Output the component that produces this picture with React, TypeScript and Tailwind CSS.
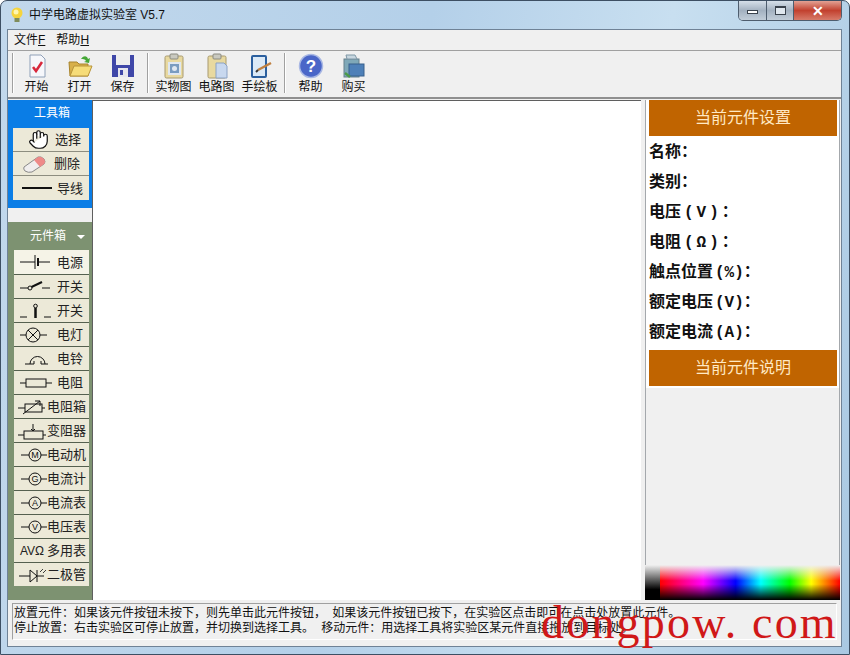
import type { ReactNode } from "react";
import { Hand } from "lucide-react";

const CJK = "font-['Liberation_Sans','Noto_Sans_CJK_SC',sans-serif]";

function ToolbarSep() {
  return <div className="mx-[3px] h-[40px] w-[2px] border-l border-r border-l-[#a0a0a0] border-r-white" />;
}

function ToolbarButton({ label, children }: { label: string; children: ReactNode }) {
  return (
    <div className="flex w-[43px] flex-col items-center">
      <svg width="26" height="26" viewBox="0 0 26 26">{children}</svg>
      <span className="mt-[1px] text-[12px] leading-[14px] text-[#111] whitespace-nowrap">{label}</span>
    </div>
  );
}

function Clipboard({ children }: { children: ReactNode }) {
  return (
    <>
      <rect x="4" y="3" width="18" height="22" rx="1.5" fill="#e8d9a0" stroke="#a89a70" />
      <rect x="9" y="1" width="8" height="5" rx="1" fill="#c9c9c0" stroke="#8b8b80" />
      {children}
    </>
  );
}

function Symbol({ children }: { children: ReactNode }) {
  return (
    <svg width="36" height="20" viewBox="0 0 36 20" fill="none" stroke="#111" strokeWidth="1" className="shrink-0">
      {children}
    </svg>
  );
}

function PartButton({ label, tight, icon }: { label: string; tight?: boolean; icon: ReactNode }) {
  return (
    <div className="flex h-[24px] w-[75px] items-center overflow-hidden border-t border-t-[#55604f] bg-[#ece9d8]">
      <div className={tight ? "ml-[3px] flex w-[30px] justify-center" : "ml-[3px] flex w-[38px] justify-center"}>{icon}</div>
      <span className={`text-[13px] leading-none text-[#222] whitespace-nowrap ${tight ? "" : "ml-[2px]"}`}>{label}</span>
    </div>
  );
}

const Meter = ({ t }: { t: string }) => (
  <Symbol>
    <path d="M7 10h8M27 10h6" />
    <circle cx="21" cy="10" r="6" />
    <text x="21" y="13" textAnchor="middle" fontSize="9" fill="#111" stroke="none" fontFamily="Liberation Sans">{t}</text>
  </Symbol>
);

const parts: { label: string; tight?: boolean; icon: ReactNode }[] = [
  { label: "开关", icon: <Symbol><path d="M2 11h8M24 11h8" /><circle cx="12" cy="11" r="2" /><path d="M13.5 10 L24 5" strokeWidth="2" /></Symbol> },
  { label: "开关", icon: <Symbol><path d="M2 16h7M26 16h7" /><path d="M17.5 7v10" strokeWidth="2.5" /><circle cx="17.5" cy="5" r="1.8" /></Symbol> },
  { label: "电灯", icon: <Symbol><path d="M2 10h6M22 10h7" /><circle cx="15" cy="10" r="7" /><path d="M10 5l10 10M20 5L10 15" /></Symbol> },
  { label: "电铃", icon: <Symbol><path d="M7 15h9M23 15h7M12 15a7.500 7.500 0 0 1 15 0" /><path d="M16 15v-3M23 15v-3" /></Symbol> },
  { label: "电阻", icon: <Symbol><path d="M2 10h6M28 10h6" /><rect x="8" y="6" width="20" height="8" /></Symbol> },
  { label: "电阻箱", tight: true, icon: <Symbol><path d="M4 11h7M28 11h3" /><rect x="11" y="7" width="17" height="8" /><path d="M9 17L26 4M21 4h5v5" /></Symbol> },
  { label: "变阻器", tight: true, icon: <Symbol><path d="M4 14h6M29 14h3" /><rect x="10" y="10" width="19" height="8" /><path d="M19 3v7M17 8l2 2 2-2" /></Symbol> },
  { label: "电动机", tight: true, icon: <Meter t="M" /> },
  { label: "电流计", tight: true, icon: <Meter t="G" /> },
  { label: "电流表", tight: true, icon: <Meter t="A" /> },
  { label: "电压表", tight: true, icon: <Meter t="V" /> },
  { label: "多用表", tight: true, icon: <span className="text-[12px] leading-none text-[#222] whitespace-nowrap">AVΩ</span> },
  { label: "二极管", tight: true, icon: <Symbol><path d="M5 11h11M23 11h7" /><path d="M16 5v12l7-6zM23 5v12" /><path d="M26 7l3-3M29 8l3-3" strokeWidth="0.8" /></Symbol> },
];

const fields: { name: string; unit?: string; wide?: boolean }[] = [
  { name: "名称" },
  { name: "类别" },
  { name: "电压", unit: "(V)", wide: true },
  { name: "电阻", unit: "(Ω)", wide: true },
  { name: "触点位置", unit: "(%)" },
  { name: "额定电压", unit: "(V)" },
  { name: "额定电流", unit: "(A)" },
];

export default function App() {
  return (
    <div className={`relative flex h-[655px] w-[850px] flex-col overflow-hidden rounded-t-[7px] border border-[#3d4f63] bg-[linear-gradient(100deg,#c2d8ec_0%,#b4d0e9_45%,#c8dff0_70%,#a9c8e2_100%)] ${CJK}`}>
      {/* title bar */}
      <div className="flex h-[28px] shrink-0 items-center pl-[8px]">
        <svg width="16" height="20" viewBox="0 0 16 20">
          <circle cx="8" cy="8" r="5.5" fill="#f6d43c" />
          <circle cx="7" cy="7" r="2.5" fill="#fff6b0" />
          <rect x="5.5" y="13" width="5" height="4" fill="#7f8c5a" />
        </svg>
        <span className="ml-[4px] text-[12px] whitespace-pre text-[#111]">中学电路虚拟实验室 V5.7</span>
        <div className="mr-[7px] ml-auto flex h-[20px] self-start overflow-hidden rounded-b-[5px] border border-t-0 border-[#4e5d6e]">
          <div className="flex w-[28px] items-center justify-center border-r border-[#4e5d6e] bg-[linear-gradient(#d5dfe9,#a3b1c0_50%,#c1cdd8)]">
            <div className="mt-[3px] h-[4px] w-[11px] border border-[#39424c] bg-white" />
          </div>
          <div className="flex w-[27px] items-center justify-center border-r border-[#4e5d6e] bg-[linear-gradient(#d5dfe9,#a3b1c0_50%,#c1cdd8)]">
            <div className="h-[9px] w-[11px] border border-[#39424c] border-t-2 bg-[#dfe7ee]" />
          </div>
          <div className="flex w-[47px] items-center justify-center bg-[linear-gradient(#e3a193,#c2412f_50%,#d77b6a)] text-[14px] font-bold leading-none text-white">✕</div>
        </div>
      </div>

      <div className="mr-[7px] ml-[6px] flex min-h-0 flex-1 flex-col border border-[#6f8296] bg-[#f0f0f0]">
        {/* menu */}
        <div className="flex h-[21px] shrink-0 items-center gap-[11px] border-b border-[#a0a0a0] pl-[6px] text-[12px] text-[#111]">
          <span>文件<span className="underline">F</span></span>
          <span>帮助<span className="underline">H</span></span>
        </div>

        {/* toolbar */}
        <div className="flex h-[48px] shrink-0 items-center border-b-2 border-[#8f8f8f] pb-[2px] pl-[1px]">
          <div className="-mr-[2px] flex">
            <ToolbarSep />
          </div>
          <ToolbarButton label="开始">
            <path d="M6 2h11l4 4v18H6z" fill="#f6f7fb" stroke="#8fa0b8" />
            <path d="M9 14l3 4 6-9" fill="none" stroke="#d8283c" strokeWidth="2.5" />
          </ToolbarButton>
          <ToolbarButton label="打开">
            <path d="M2 9h8l2 2h9v12H3z" fill="#d8b04a" stroke="#a8842c" />
            <path d="M3 23l4-10h18l-4 10z" fill="#f6dc78" stroke="#b8943a" />
            <path d="M14 6c3-4 6-3 7 0l2-1-1 5-5-1 2-1c-1-2-3-2-5-2z" fill="#46a838" />
          </ToolbarButton>
          <ToolbarButton label="保存">
            <path d="M2 2h22v22H2z" fill="#3f47a8" />
            <rect x="6" y="2" width="14" height="10" fill="#eeeeee" />
            <rect x="8" y="15" width="10" height="9" fill="#e6e6ee" />
            <rect x="10" y="17" width="3" height="5" fill="#3f47a8" />
          </ToolbarButton>
          <ToolbarSep />
          <ToolbarButton label="实物图">
            <Clipboard>
              <rect x="8" y="10" width="11" height="11" fill="#7a9cc0" stroke="#dfe7f0" strokeWidth="2" />
              <circle cx="13.5" cy="15.5" r="2.5" fill="#dfe7f0" />
            </Clipboard>
          </ToolbarButton>
          <ToolbarButton label="电路图">
            <Clipboard>
              <path d="M12 10h8l3 3v12H12z" fill="#c8d8ef" stroke="#8ba2c4" />
            </Clipboard>
          </ToolbarButton>
          <ToolbarButton label="手绘板">
            <rect x="5" y="3" width="14" height="21" rx="1" fill="#dbe9f6" stroke="#2b5f9e" strokeWidth="2" />
            <path d="M11 17L24 10" stroke="#c08040" strokeWidth="2.5" />
            <path d="M9 19l2-2" stroke="#333" strokeWidth="2" />
          </ToolbarButton>
          <ToolbarSep />
          <ToolbarButton label="帮助">
            <circle cx="13" cy="13" r="11.5" fill="#4a66c8" stroke="#a9b8e4" strokeWidth="1.5" />
            <text x="13" y="19" textAnchor="middle" fontSize="17" fontWeight="bold" fill="#fff" fontFamily="Liberation Sans">?</text>
          </ToolbarButton>
          <ToolbarButton label="购买">
            <rect x="3" y="6" width="15" height="18" fill="#7fa8b8" stroke="#66808c" />
            <rect x="8" y="11" width="15" height="12" fill="#4e80b8" stroke="#39608c" />
            <path d="M5 2h9l2 4H6z" fill="#c7d6df" stroke="#7f97a6" />
            <path d="M4 20l5 4" stroke="#4c9a48" strokeWidth="2.5" />
          </ToolbarButton>
        </div>

        {/* main */}
        <div className="flex min-h-0 flex-1 pt-[1px]">
          <div className="flex w-[84px] shrink-0 flex-col">
            <div className="flex h-[108px] flex-col items-end bg-[#0a7de6] pr-[3px]">
              <div className="flex h-[26px] w-full items-center pl-[26px] text-[12px] text-white">工具箱</div>
              <div className="mt-[2px] flex h-[24px] w-[76px] items-center border-b border-[#8d8d80] bg-[#ece9d8]">
                <Hand size={21} strokeWidth={1.4} className="ml-[15px] text-[#111]" fill="#fff" />
                <span className="ml-[6px] text-[13px] leading-none text-[#222]">选择</span>
              </div>
              <div className="flex h-[24px] w-[76px] items-center border-b border-[#8d8d80] bg-[#ece9d8]">
                <svg width="26" height="20" viewBox="0 0 26 20" className="ml-[9px]">
                  <path d="M2 13L16 3q3-1 6 2 2 3 0 5L10 18q-4 1-7-1-2-2-1-4z" fill="#f0eeee" stroke="#888" />
                  <path d="M12 6L16 3q3-1 6 2 2 3 0 5l-4 3z" fill="#ee8a88" />
                </svg>
                <span className="ml-[6px] text-[13px] leading-none text-[#222]">删除</span>
              </div>
              <div className="flex h-[24px] w-[76px] items-center bg-[#ece9d8]">
                <div className="ml-[9px] h-[2px] w-[30px] bg-[#111]" />
                <span className="ml-[5px] text-[13px] leading-none text-[#222]">导线</span>
              </div>
            </div>
            <div className="h-[14px] shrink-0" />
            <div className="flex flex-1 flex-col items-end bg-[#7d9271] pr-[3px]">
              <div className="flex h-[28px] w-full items-center gap-[11px] pl-[22px] text-[12px] text-white">
                <span>元件箱</span>
                <span className="mt-[1px] h-0 w-0 border-x-[4px] border-t-[4px] border-x-transparent border-t-white" />
              </div>
              <div className="flex h-[24px] w-[75px] items-center overflow-hidden bg-[#f5f3e7]">
                <div className="ml-[3px] flex w-[38px] justify-center">
                  <Symbol><path d="M2 10h15M17 3v14M20 10h12" /><path d="M20 6v8" strokeWidth="2" /></Symbol>
                </div>
                <span className="ml-[2px] text-[13px] leading-none text-[#222]">电源</span>
              </div>
              {parts.map((p, i) => (
                <PartButton key={i} label={p.label} tight={p.tight} icon={p.icon} />
              ))}
            </div>
          </div>

          <div className="h-full w-[549px] shrink-0 border-t border-l border-[#5f5f5f] bg-white" />

          <div className="ml-[4px] flex min-w-0 flex-1 flex-col pr-[1px]">
            <div className="flex-1 border-x border-[#a4a8ac]">
              <div className="bg-white pr-[2px] pb-[2px] pl-[3px]">
                <div className="flex h-[36px] items-center justify-center bg-[#c06400] text-[16px] text-[#ffe9c4]">当前元件设置</div>
                <div className="flex h-[214px] flex-col pt-[2px] font-['Liberation_Mono','Noto_Sans_CJK_SC',monospace]">
                  {fields.map((f) => (
                    <div key={f.name} className="flex h-[30px] items-center text-[16px] font-bold whitespace-pre text-[#111]">
                      {f.name}
                      {f.unit && <span className={f.wide ? "pl-[3px] tracking-[3px]" : "pl-[2px]"}>{f.unit}</span>}
                      ：
                    </div>
                  ))}
                </div>
                <div className="flex h-[36px] items-center justify-center bg-[#c06400] text-[16px] text-[#ffe9c4]">当前元件说明</div>
              </div>
            </div>
            <div className="flex h-[35px] shrink-0">
              <div className="h-full w-[15px] bg-[linear-gradient(#f0f0f0,#000_70%)]" />
              <div className="relative h-full flex-1 bg-[linear-gradient(90deg,#f00,#f0f_24%,#00f_42%,#0ff_56%,#0f0_72%,#ff0_84%,#f00_100%)]">
                <div className="absolute inset-0 bg-[linear-gradient(#f0f0f0,transparent_45%,transparent_55%,#000)]" />
              </div>
            </div>
          </div>
        </div>

        {/* status */}
        <div className="mt-[3px] mr-[4px] mb-[6px] ml-[4px] h-[37px] shrink-0 border border-[#a0a0a0] border-r-white border-b-white pt-[2px] pl-[1px] text-[12px] leading-[15px] whitespace-pre text-[#111]">
          <div>放置元件：如果该元件按钮未按下，则先单击此元件按钮， <span className="ml-[3px]">如果该元件按钮已按下，在实验区点击即可在点击处放置此元件。</span></div>
          <div>停止放置：右击实验区可停止放置，并切换到选择工具。 <span className="ml-[4px]">移动元件：用选择工具将实验区某元件直接拖放到目标处。</span></div>
        </div>
      </div>
      <div className="h-[7px] shrink-0" />

      {/* watermark */}
      <div className="absolute top-[592px] left-[540px] font-['Liberation_Serif',serif] text-[46px] leading-[60px] tracking-[2.2px] whitespace-nowrap text-[#d01818]">
        dongpow. com
      </div>
    </div>
  );
}
